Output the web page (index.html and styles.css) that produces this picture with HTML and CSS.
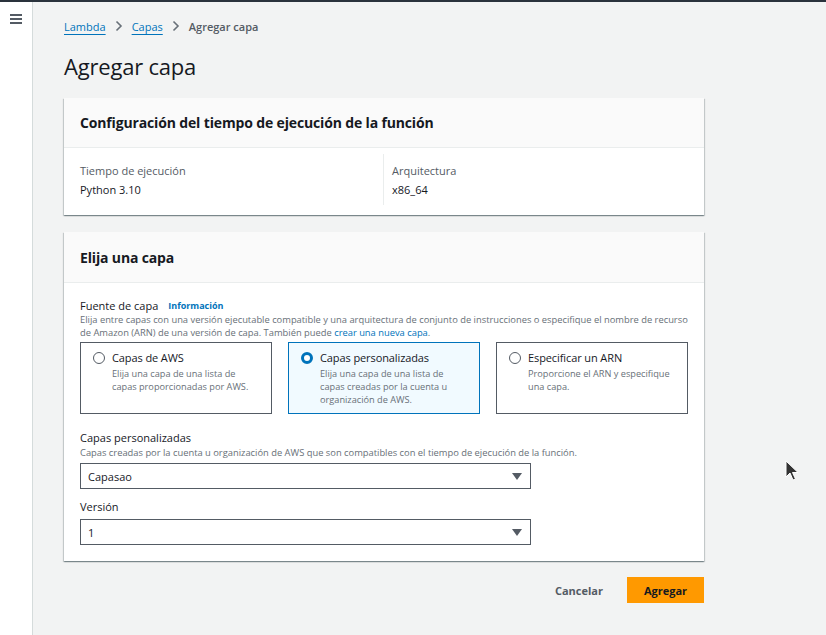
FILE: index.html
```html
<!DOCTYPE html>
<html lang="es">
<head>
<meta charset="utf-8">
<link rel="stylesheet" href="styles.css">
</head>
<body>
<div class="topbar"></div>
<div class="layout">
  <aside class="sidebar">
    <svg class="burger" width="12" height="10" viewBox="0 0 12 10"><rect x="0" y="0" width="12" height="2" fill="#545b64"/><rect x="0" y="4" width="12" height="2" fill="#545b64"/><rect x="0" y="8" width="12" height="2" fill="#545b64"/></svg>
  </aside>
  <main class="main">
    <nav class="crumbs">
      <a class="crumb-link">Lambda</a>
      <svg class="chev" width="8" height="12" viewBox="0 0 8 12"><path d="M1.5 1.5 L6 6 L1.5 10.5" fill="none" stroke="#687078" stroke-width="1.6"/></svg>
      <a class="crumb-link">Capas</a>
      <svg class="chev" width="8" height="12" viewBox="0 0 8 12"><path d="M1.5 1.5 L6 6 L1.5 10.5" fill="none" stroke="#687078" stroke-width="1.6"/></svg>
      <span class="crumb-current">Agregar capa</span>
    </nav>
    <h1 class="page-title">Agregar capa</h1>

    <section class="card card-runtime">
      <header class="card-head"><h2>Configuración del tiempo de ejecución de la función</h2></header>
      <div class="card-body cols">
        <div class="col">
          <div class="kv-label">Tiempo de ejecución</div>
          <div class="kv-value">Python 3.10</div>
        </div>
        <div class="col col-right">
          <div class="kv-label">Arquitectura</div>
          <div class="kv-value">x86_64</div>
        </div>
      </div>
    </section>

    <section class="card card-layer">
      <header class="card-head"><h2>Elija una capa</h2></header>
      <div class="card-body form">
        <div class="field-label first">Fuente de capa <a class="info">Información</a></div>
        <p class="field-desc">Elija entre capas con una versión ejecutable compatible y una arquitectura de conjunto de instrucciones o especifique el nombre de recurso de Amazon (ARN) de una versión de capa. También puede <a class="link">crear una nueva capa</a>.</p>
        <div class="tiles">
          <div class="tile">
            <span class="radio"></span>
            <div class="tile-text">
              <div class="tile-title">Capas de AWS</div>
              <div class="tile-desc">Elija una capa de una lista de capas proporcionadas por AWS.</div>
            </div>
          </div>
          <div class="tile tile-on">
            <span class="radio radio-on"></span>
            <div class="tile-text">
              <div class="tile-title">Capas personalizadas</div>
              <div class="tile-desc">Elija una capa de una lista de capas creadas por la cuenta u organización de AWS.</div>
            </div>
          </div>
          <div class="tile">
            <span class="radio"></span>
            <div class="tile-text">
              <div class="tile-title">Especificar un ARN</div>
              <div class="tile-desc">Proporcione el ARN y especifique una capa.</div>
            </div>
          </div>
        </div>

        <div class="field-label label-2">Capas personalizadas</div>
        <p class="field-desc">Capas creadas por la cuenta u organización de AWS que son compatibles con el tiempo de ejecución de la función.</p>
        <div class="select"><span>Capasao</span><svg width="10" height="7" viewBox="0 0 10 7"><path d="M0 0 H10 L5 7 Z" fill="#545b64"/></svg></div>

        <div class="field-label label-3">Versión</div>
        <div class="select"><span>1</span><svg width="10" height="7" viewBox="0 0 10 7"><path d="M0 0 H10 L5 7 Z" fill="#545b64"/></svg></div>
      </div>
    </section>

    <div class="actions">
      <button class="btn-link">Cancelar</button>
      <button class="btn-primary">Agregar</button>
    </div>
  </main>
</div>
<svg class="cursor" width="14" height="22" viewBox="0 0 14 22"><path d="M1 1 L1 17 L5 13 L8 20 L10.5 19 L7.5 12.5 L13 12.5 Z" fill="#333" stroke="#fff" stroke-width="1"/></svg>
</body>
</html>
```
FILE: styles.css
```css
* { box-sizing: border-box; }
html, body { margin: 0; padding: 0; }
body {
  background: #f2f3f3;
  font-family: "Open Sans", "Noto Sans", sans-serif;
  color: #16191f;
  width: 826px;
  height: 635px;
  overflow: hidden;
  position: relative;
}
.topbar { height: 2px; background: #2a323c; }
.layout { display: flex; height: 633px; }
.sidebar {
  width: 33px;
  flex: none;
  background: #fff;
  border-right: 1px solid #d5dbdb;
  padding: 12px 0 0 10px;
}
.burger { display: block; }
.main { padding: 16px 0 0 31px; width: 671px; }

.crumbs { display: flex; align-items: center; height: 16px; font-size: 11px; gap: 9px; }
.crumb-link { color: #0073bb; text-decoration: underline; text-underline-offset: 3px; }
.chev { display: block; }
.crumb-current { color: #545b64; font-weight: 600; }

.page-title {
  margin: 19px 0 0;
  font-size: 22px;
  font-weight: 400;
  line-height: 26px;
  letter-spacing: -0.2px;
}

.card {
  background: #fff;
  width: 640px;
  box-shadow: 0 1px 1px 0 rgba(0,28,36,.3), 1px 1px 1px 0 rgba(0,28,36,.15), -1px 1px 1px 0 rgba(0,28,36,.15);
}
.card-runtime { margin-top: 19px; }
.card-layer { margin-top: 17px; }
.card-head {
  height: 50px;
  background: #fafafa;
  border-bottom: 1px solid #eaeded;
  display: flex;
  align-items: center;
  padding: 0 16px;
}
.card-layer .card-head { height: 51px; }
.card-head h2 { margin: 0; font-size: 14px; font-weight: 700; letter-spacing: -0.15px; }

.cols { display: flex; padding: 6px 16px 10px; }
.col { padding-top: 9px; height: 51px; }
.col:first-child { width: 303px; flex: none; }
.col-right { flex: 1; border-left: 1px solid #eaeded; padding-left: 8px; }
.kv-label { font-size: 11px; line-height: 16px; color: #545b64; }
.kv-value { font-size: 11px; line-height: 16px; margin-top: 3px; }

.form { padding: 16px 16px 16px; }
.field-label { font-size: 11px; line-height: 16px; display: flex; gap: 10px; align-items: center; }
.field-label.first { line-height: 14px; }
.info { color: #0073bb; font-weight: 700; font-size: 9px; }
.field-desc { margin: 0; font-size: 9.35px; line-height: 13px; color: #687078; }
.link { color: #0073bb; }
.tiles { display: grid; grid-template-columns: 192px 192px 192px; gap: 16px; margin-top: 3px; }
.tile {
  height: 72px;
  border: 1px solid #545b64;
  display: flex;
  padding: 7px 12px;
  gap: 7px;
}
.tile-on { border-color: #0073bb; background: #f1faff; }
.radio {
  width: 12px; height: 12px; border-radius: 50%;
  border: 1px solid #545b64; background: #fff;
  flex: none; margin-top: 2px;
}
.radio-on { border: 3.5px solid #0073bb; }
.tile-title { font-size: 11px; line-height: 15px; letter-spacing: -0.1px; }
.tile-desc { font-size: 9.2px; line-height: 13px; color: #687078; margin-top: 2px; }

.label-2 { margin-top: 16px; }
.select {
  width: 451px; height: 26px;
  border: 1px solid #545b64;
  margin-top: 4px;
  display: flex; align-items: center; justify-content: space-between;
  padding: 0 8px 0 7px;
  font-size: 11px;
  background: #fff;
}
.label-3 { margin-top: 10px; }

.actions { display: flex; justify-content: flex-end; align-items: center; width: 640px; margin-top: 16px; gap: 24px; }
.btn-link { background: none; border: 0; font: inherit; font-size: 11px; font-weight: 700; color: #545b64; padding: 0; }
.btn-primary {
  background: #ff9900; border: 0; font: inherit; font-size: 11px; font-weight: 700; color: #16191f;
  width: 77px; height: 26px; padding: 0;
}
.cursor { position: absolute; left: 785px; top: 460px; }
```
